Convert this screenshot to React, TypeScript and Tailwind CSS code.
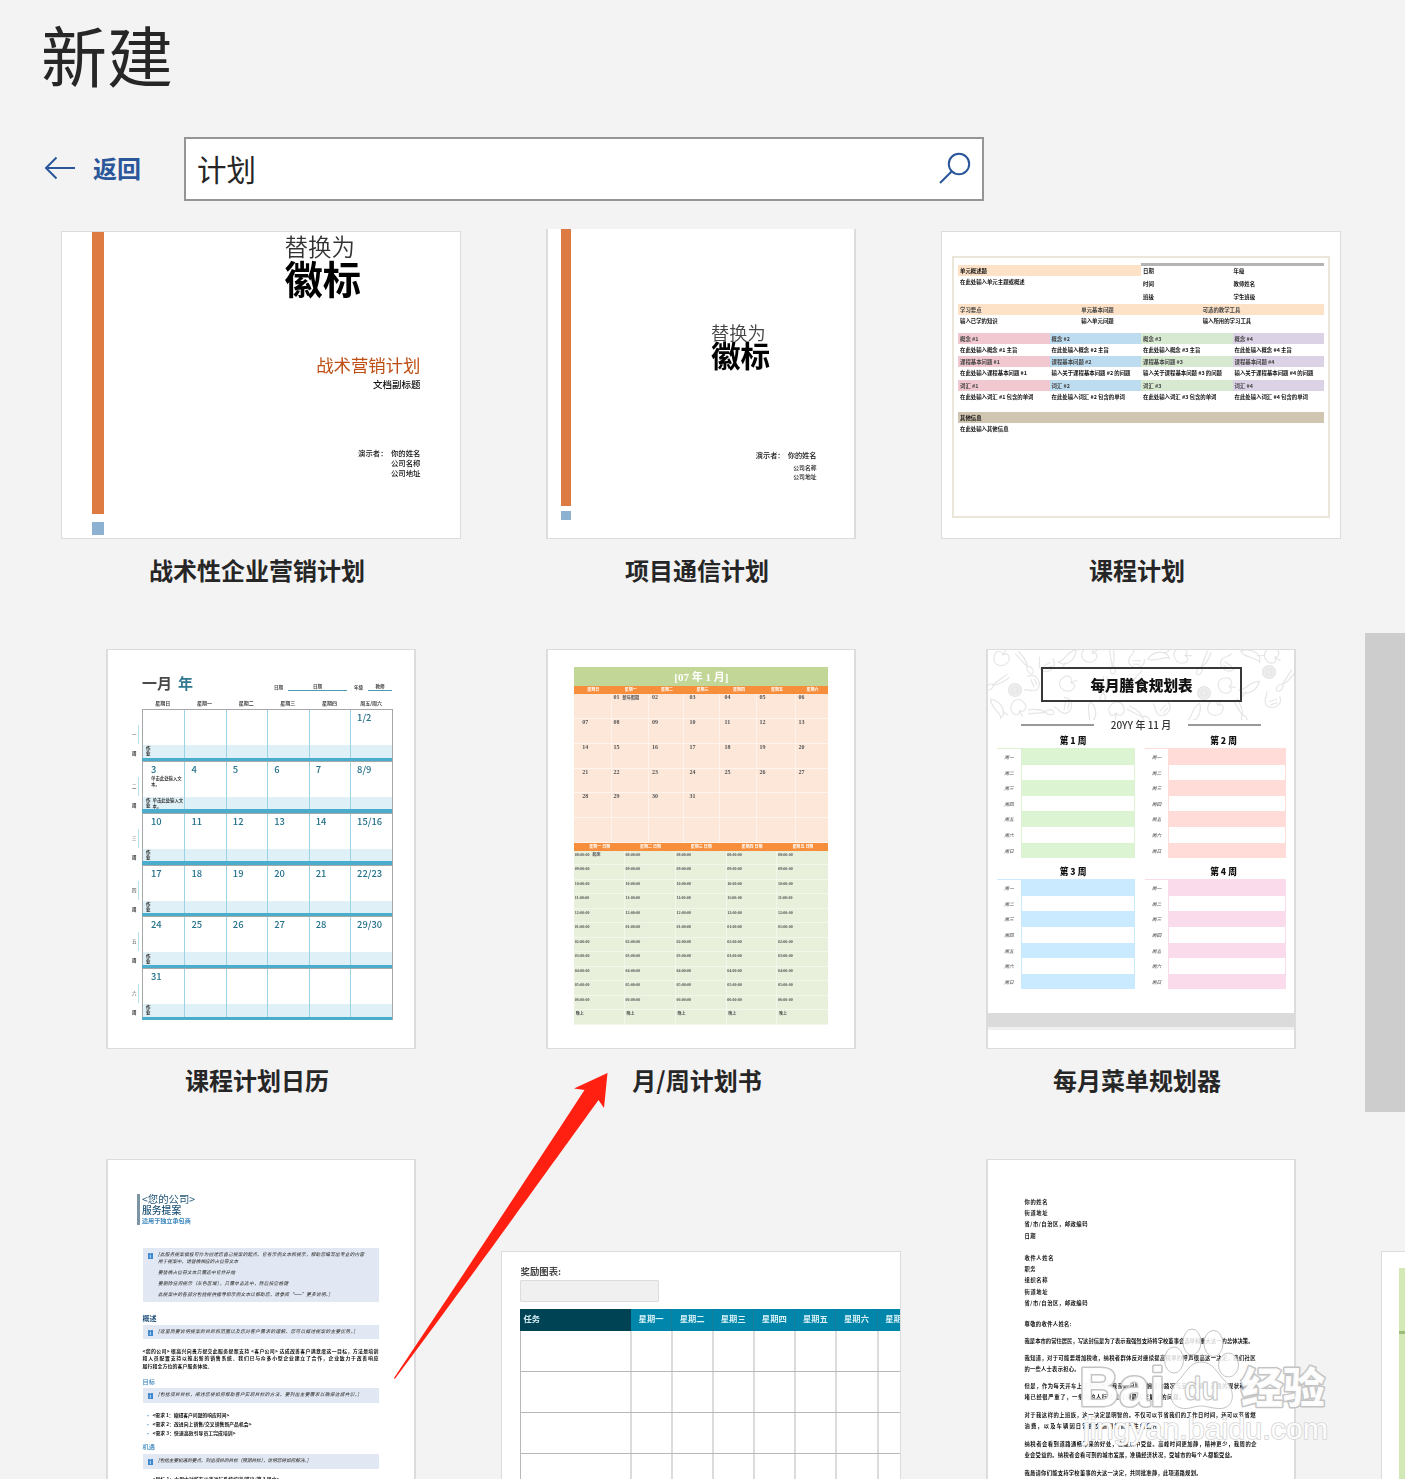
import type { ReactNode } from 'react';
import clsx from 'clsx';

type Line = { text: string; width: number; gap?: number };

// One line of miniature document text, stretched to its printed width
const Fine = ({ text, width, gap = 0, className }: Line & { className?: string }) => (
  <div
    className={clsx('h-[7px] whitespace-nowrap leading-[7px] [text-align-last:justify]', className)}
    style={{ width, marginTop: gap }}
  >
    {text}
  </div>
);

const Portrait = ({ children }: { children?: ReactNode }) => (
  <div className="h-[400px] w-[310px] overflow-hidden border-x-2 border-y border-[#dcdcdc] bg-white">
    <div className="flex h-full w-full flex-col blur-[0.7px]">{children}</div>
  </div>
);

const Landscape = ({ children }: { children?: ReactNode }) => (
  <div className="h-[308px] w-[400px] overflow-hidden border border-[#dcdcdc] bg-white">
    <div className="flex h-full w-full flex-col blur-[0.7px]">{children}</div>
  </div>
);

const MarketingThumb = () => (
  <Landscape>
    <div className="flex h-full">
      <div className="ml-[30px] w-[11.5px] shrink-0">
        <div className="-mt-px h-[283px] bg-[#dd7b42]" />
        <div className="mt-[7.5px] h-[13px] bg-[#8db2d1]" />
      </div>
      <div className="flex w-[317px] flex-col text-[#111]">
        <div className="ml-[181px] mt-px h-[26px] text-[23.5px] font-[350] leading-[26px] text-[#333]">替换为</div>
        <div className="ml-[181px] mt-[-1px] h-[40px] text-[38.3px] font-bold leading-[40px] text-black">徽标</div>
        <div className="mt-[55.5px] h-[22px] text-right text-[17.4px] leading-[22px] text-[#bd4d12]">战术营销计划</div>
        <div className="mt-[2.5px] h-[12px] text-right text-[9.5px] font-medium leading-[12px]">文档副标题</div>
        <div className="mt-[57.5px] text-right text-[7.4px] font-medium leading-[10.4px]">
          <p>演示者：&nbsp; 你的姓名</p>
          <p>公司名称</p>
          <p>公司地址</p>
        </div>
      </div>
    </div>
  </Landscape>
);

const CommunicationThumb = () => (
  <Portrait>
    <div className="flex h-full">
      <div className="ml-[13px] w-[9.5px] shrink-0">
        <div className="h-[365.5px] bg-[#dd7b42]" />
        <div className="mt-[5px] h-[9px] bg-[#8db2d1]" />
      </div>
      <div className="flex w-[246px] flex-col text-[#111]">
        <div className="ml-[140.5px] mt-[182px] h-[20px] text-[18.2px] font-[350] leading-[20px] text-[#444]">替换为</div>
        <div className="ml-[140.5px] mt-[-2.5px] h-[30px] text-[29.6px] font-bold leading-[30px] text-black">徽标</div>
        <div className="mt-[80px] text-right text-[7.2px] font-medium leading-[10px]">演示者：&nbsp; 你的姓名</div>
        <div className="mt-[3px] text-right text-[5.8px] font-medium leading-[9px]">
          <p>公司名称</p>
          <p>公司地址</p>
        </div>
      </div>
    </div>
  </Portrait>
);

const lessonColors = ['bg-[#f1c8d0]', 'bg-[#bedcf0]', 'bg-[#d7e9d0]', 'bg-[#dcd2e6]'];

const lessonBlocks = [
  {
    head: ['概念 #1', '概念 #2', '概念 #3', '概念 #4'],
    body: ['在此处输入概念 #1 主旨', '在此处输入概念 #2 主旨', '在此处输入概念 #3 主旨', '在此处输入概念 #4 主旨'],
    width: [57, 57, 57, 57],
  },
  {
    head: ['课程基本问题 #1', '课程基本问题 #2', '课程基本问题 #3', '课程基本问题 #4'],
    body: [
      '在此处输入课程基本问题 #1',
      '输入关于课程基本问题 #2 的问题',
      '输入关于课程基本问题 #3 的问题',
      '输入关于课程基本问题 #4 的问题',
    ],
    width: [66, 79, 79, 79],
  },
  {
    head: ['词汇 #1', '词汇 #2', '词汇 #3', '词汇 #4'],
    body: ['在此处输入词汇 #1 包含的单词', '在此处输入词汇 #2 包含的单词', '在此处输入词汇 #3 包含的单词', '在此处输入词汇 #4 包含的单词'],
    width: [73, 73, 73, 73],
  },
];

const LessonThumb = () => (
  <Landscape>
    <div className="mx-[10px] mt-[24px] flex h-[262px] flex-col border-2 border-[#eae6da] px-[4px] pt-[5px] text-[5.4px] font-bold leading-[11px] text-[#111]">
      <div className="flex h-[40.5px]">
        <div className="w-1/2">
          <div className="mt-[2px] h-[11px] bg-[#fde2c8] pl-[2px] pt-px">单元概述题</div>
          <Fine className="ml-[2px]" text="在此处输入单元主题或概述" width={63} gap={3} />
        </div>
        <div className="w-1/2 border-t-[3px] border-[#b4b4b4]">
          {[['日期', '年级'], ['时间', '教师姓名'], ['班级', '学生班级']].map((r) => (
            <div key={r[0]} className="flex h-[12.8px] pl-[2px]">
              <span className="w-1/2">{r[0]}</span>
              <span>{r[1]}</span>
            </div>
          ))}
        </div>
      </div>
      <div className="grid h-[11.5px] grid-cols-3 bg-[#fde2c8] pl-[2px] pt-px text-[#444]">
        <span>学习要点</span>
        <span>单元基本问题</span>
        <span>可选的教学工具</span>
      </div>
      <div className="grid h-[17.5px] grid-cols-3 pl-[2px] pt-[0.5px]">
        <span>输入已学的知识</span>
        <span>输入单元问题</span>
        <span>输入所用的学习工具</span>
      </div>
      {lessonBlocks.map((b) => (
        <div key={b.head[0]} className="grid h-[23.8px] grid-cols-4">
          {b.head.map((h, i) => (
            <div key={h}>
              <div className={clsx('h-[11px] pl-[2px] pt-px text-[#444]', lessonColors[i])}>{h}</div>
              <Fine className="ml-[2px]" text={b.body[i]} width={b.width[i]} gap={3} />
            </div>
          ))}
        </div>
      ))}
      <div className="mt-[8.5px] h-[11px] bg-[#cfc5b0] pl-[2px] pt-px">其他信息</div>
      <Fine className="ml-[2px]" text="在此处输入其他信息" width={47} gap={3} />
    </div>
  </Landscape>
);

const calendarWeeks = [
  ['', '', '', '', '', '1/2'],
  ['3', '4', '5', '6', '7', '8/9'],
  ['10', '11', '12', '13', '14', '15/16'],
  ['17', '18', '19', '20', '21', '22/23'],
  ['24', '25', '26', '27', '28', '29/30'],
  ['31', '', '', '', '', ''],
];

const CalendarThumb = () => (
  <Portrait>
    <div className="ml-[34px] mt-[23px] flex h-[19px] w-[250px] items-center text-[15px] font-bold leading-[19px] text-[#484848]">
      一月
      <span className="ml-[6px] text-[#2f7890]">年</span>
      <div className="ml-auto mt-[9px] flex h-[10px] items-center text-[4.5px] font-bold leading-[7px]">
        <span className="w-[14px]">日期</span>
        <span className="w-[59px] border-b-[1.5px] border-[#4d9ab3] text-center">日期</span>
        <span className="ml-[7px] w-[14px]">年级</span>
        <span className="w-[24px] border-b-[1.5px] border-[#4d9ab3] text-center">教师</span>
      </div>
    </div>
    <div className="ml-[34px] mt-[5px] grid h-[12px] w-[250px] grid-cols-6 text-center text-[5px] font-bold leading-[11px] text-[#444]">
      {['星期日', '星期一', '星期二', '星期三', '星期四', '周五/周六'].map((d) => (
        <span key={d}>{d}</span>
      ))}
    </div>
    <div className="flex flex-col">
      {calendarWeeks.map((week, w) => (
        <div key={w} className="flex h-[51.85px]">
          <div className="flex w-[34px] justify-end pt-[16px] text-[4.5px] leading-[19px] text-[#333]">
            <div className="w-[5px]">
              <p>{['一', '二', '三', '四', '五', '六'][w]}</p>
              <p className="font-bold">周</p>
            </div>
            <div className="mr-[3px] ml-[1px] h-[19px] w-px bg-[#b5e0ee]" />
          </div>
          <div className="grid w-[250.5px] grid-cols-6 border-x border-t border-[#a5a8aa] text-[9.4px] font-medium text-[#22708a]">
            {week.map((day, i) => (
              <div key={i} className={clsx('flex flex-col', i > 0 && 'border-l-[1.5px] border-[#9bd3e4]')}>
                <div className={clsx('h-[35px] pt-px leading-[12px]', i === 0 ? 'pl-[8px]' : 'pl-[6px]')}>
                  {day}
                  {day === '3' && (
                    <p className="whitespace-nowrap text-[4.4px] leading-[6px] text-[#222]">单击此处输入文<br />本。</p>
                  )}
                </div>
                <div className="flex h-[12.5px] items-center bg-[#dff0f6] text-[4.4px] leading-[6px] text-[#222]">
                  {i === 0 && <span className="ml-[3px] text-[4.5px] font-bold leading-[5px]">作<br />业</span>}
                  {day === '3' && <span className="ml-[2px] whitespace-nowrap">单击此处输入文<br />本。</span>}
                </div>
                <div className="-ml-[1.5px] h-[3.4px] bg-[#4badcc]" />
              </div>
            ))}
          </div>
        </div>
      ))}
    </div>
  </Portrait>
);

const plannerCols = 'grid grid-cols-[37.7px_37.5px_35px_36px_37px_39px_1fr]';
const plannerDays = [
  ['', '01', '02', '03', '04', '05', '06'],
  ['07', '08', '09', '10', '11', '12', '13'],
  ['14', '15', '16', '17', '18', '19', '20'],
  ['21', '22', '23', '24', '25', '26', '27'],
  ['28', '29', '30', '31', '', '', ''],
  ['', '', '', '', '', '', ''],
];
const plannerHours = ['08', '09', '10', '11', '12', '01', '02', '03', '04', '05', '06'];
const dayIndent = ['pl-[8px]', 'pl-[1.5px]', 'pl-[2.5px]', 'pl-[5px]', 'pl-[4px]', 'pl-[2px]', 'pl-[2px]'];

const PlannerThumb = () => (
  <Portrait>
    <div className="ml-[26.3px] mt-[17.3px] w-[254px] font-['Liberation_Serif','Noto_Sans_CJK_SC',serif]">
      <div className="h-[19px] bg-[#c2d698] text-center text-[11px] font-bold leading-[20px] text-white">[07 年 1 月]</div>
      <div className={clsx(plannerCols, 'h-[7.7px] bg-[#f78e3c] text-center text-[4px] font-bold leading-[7px] text-white')}>
        {['星期日', '星期一', '星期二', '星期三', '星期四', '星期五', '星期六'].map((d) => (
          <span key={d}>{d}</span>
        ))}
      </div>
      {plannerDays.map((row, r) => (
        <div key={r} className={clsx(plannerCols, 'h-[24.85px] border-b border-[#fef5ef] bg-[#fce7d9] text-[6px] font-bold leading-[7px] text-[#555]')}>
          {row.map((d, i) => (
            <span key={i} className={clsx('whitespace-nowrap', dayIndent[i], i < 6 && 'border-r border-[#fef2ea]')}>
              {d}
              {d === '01' && <span className="ml-[3px] text-[4.2px]">新年假期</span>}
            </span>
          ))}
        </div>
      ))}
      <div className="grid h-[7.5px] grid-cols-5 bg-[#f78e3c] text-center text-[4px] font-bold leading-[7px] text-white">
        {['一', '二', '三', '四', '五'].map((d) => (
          <span key={d}>星期{d} 日期</span>
        ))}
      </div>
      {[...plannerHours, '晚上'].map((h) => (
        <div key={h} className="grid h-[14.5px] grid-cols-5 border-b border-[#f2f7eb] bg-[#e8efdb] text-[4px] font-bold leading-[7px] text-[#555]">
          {[0, 1, 2, 3, 4].map((c) => (
            <span key={c} className={clsx('pl-[0.5px]', c < 4 && 'border-r border-[#f2f7eb]')}>
              {h === '晚上' ? <span className="ml-px">晚上</span> : `${h}:00:00`}
              {h === '08' && c === 0 && <span className="ml-[3px] text-[4px]">起床</span>}
            </span>
          ))}
        </div>
      ))}
    </div>
  </Portrait>
);

const MealWeek = ({ title, fill, line, right }: { title: string; fill: string; line: string; right?: boolean }) => (
  <div className={right ? 'w-[141px]' : 'w-[138px]'}>
    <div className={clsx('h-[14.5px] text-center text-[8.7px] font-black leading-[13px] text-[#111]', right ? 'pl-[16px]' : 'pl-[14px]')}>{title}</div>
    <div className={clsx('flex border-t', line)}>
      <div className={clsx('text-center text-[4.8px] font-medium italic leading-[15.6px] text-[#666]', right ? 'w-[23px]' : 'w-[24px]')}>
        {['一', '二', '三', '四', '五', '六', '日'].map((d) => (
          <p key={d}>周{d}</p>
        ))}
      </div>
      <div className={clsx('flex flex-1 flex-col border-x', line)}>
        {[0, 1, 2, 3, 4, 5, 6].map((i) => (
          <div key={i} className={clsx('-mx-px h-[15.6px]', i % 2 === 0 && fill)} />
        ))}
      </div>
    </div>
  </div>
);

const doodles = [
  [14, 8], [36, 12], [58, 14], [80, 6], [102, 5], [124, 10], [148, 10], [170, 8], [194, 6], [216, 12], [240, 13], [262, 6], [284, 6],
  [10, 32], [44, 34], [8, 58], [30, 58], [52, 62], [76, 56], [102, 62], [128, 60], [150, 64], [174, 58], [206, 62], [228, 58], [252, 60], [284, 50], [262, 36],
  [80, 34], [116, 38], [154, 30], [188, 38], [238, 36], [298, 30],
];

const MealThumb = () => (
  <Portrait>
    <div className="relative h-[68px]">
      <svg className="absolute inset-0" width="306" height="70" fill="none" stroke="#e6e6e6" strokeWidth="1.2">
        {doodles.map(([x, y], i) => (
          <g key={i} transform={`translate(${x} ${y}) rotate(${(i * 53) % 180})`}>
            {i % 4 === 0 && <path d="M-8 0C-8-8 0-8 1-3 8-8 10 4 2 7-4 9-9 5-8 0ZM1-3 4-9" />}
            {i % 4 === 1 && <path d="M-12-2C-5-3 2-2 6 0M-12 2C-5 1 2 1 6 0M6 0a4 2.5 0 1 0 8 0a4 2.5 0 1 0-8 0" />}
            {i % 4 === 2 && <path d="M-7-5C0-13 10-4 7 3 3 9-3 5-5 9M-3-4 3 2M0-6 5-1" />}
            {i % 4 === 3 && <path d="M-10 3C-5-8 8-9 11-2 6-4-1 5-10 3ZM5-5 10-10" />}
          </g>
        ))}
        {[[27, 40], [281, 22], [216, 43]].map(([x, y]) => (
          <g key={x} fill="#ededed">
            <circle cx={x} cy={y} r="6.5" />
            <circle cx={x} cy={y} r="3" />
          </g>
        ))}
      </svg>
      <div className="relative ml-[53px] mt-[17px] flex h-[35px] w-[201px] items-center justify-center border-2 border-[#383838] text-[14.6px] font-black text-[#111]">
        每月膳食规划表
      </div>
    </div>
    <div className="mx-[33px] flex h-[13px] items-center justify-between text-[10px] font-medium leading-[11px] text-[#333]">
      <span className="h-[2px] w-[73px] bg-[#999]" />
      20YY 年 11 月
      <span className="h-[2px] w-[73px] bg-[#999]" />
    </div>
    <div className="ml-[9px] mt-[2.5px] flex w-[289px] flex-wrap justify-between gap-y-[6.5px]">
      <MealWeek title="第 1 周" fill="bg-[#ddf4d3]" line="border-[#ddf4d3]" />
      <MealWeek title="第 2 周" fill="bg-[#ffdcd8]" line="border-[#ffdcd8]" right />
      <MealWeek title="第 3 周" fill="bg-[#caeaff]" line="border-[#caeaff]" />
      <MealWeek title="第 4 周" fill="bg-[#fadbeb]" line="border-[#fadbeb]" right />
    </div>
    <div className="mt-auto mb-[18.5px] h-[16.5px] shrink-0 border-b-[3px] border-[#f0f0f0] bg-[#dbdbdb]" />
  </Portrait>
);

const Note = ({ lines, className }: { lines: Line[]; className: string }) => (
  <div className={clsx('flex w-[236.5px] bg-[#e1e8f3] pl-[5px] text-[4.6px] font-medium italic text-[#444]', className)}>
    <span className="mt-[2px] mr-[5px] flex h-[6px] w-[5.5px] items-center justify-center bg-[#3d88cf] text-[5px] not-italic text-white">i</span>
    <div>
      {lines.map((l) => (
        <Fine key={l.text} {...l} />
      ))}
    </div>
  </div>
);

const ProposalThumb = () => (
  <Portrait>
    <div className="ml-[29px] mt-[33.5px] h-[31px] border-l-[3.5px] border-[#7d95a3] pl-[2px] text-[#1f5377]">
      <div className="h-[11.5px] text-[10.4px] leading-[10px]">&lt;您的公司&gt;</div>
      <div className="h-[10.5px] text-[9.8px] font-medium leading-[10px]">服务提案</div>
      <div className="text-[6.1px] font-bold leading-[10px] text-[#3a86bd]">适用于独立承包商</div>
    </div>
    <div className="ml-[34.5px] mt-[23px] flex flex-col">
      <Note
        className="h-[54.5px] pt-[3px]"
        lines={[
          { text: '[此服务提案模板可作为创建您自己提案的起点。它有示例文本和提示，帮助您编写出专业的内容', width: 206 },
          { text: '用于提案中，请替换相应的占位符文本', width: 80, gap: 0.5 },
          { text: '要替换占位符文本只需选中它并开始', width: 77, gap: 3.5 },
          { text: '要删除任何提示（灰色区域），只需单击选中，然后按空格键', width: 130, gap: 4 },
          { text: '此提案中的各部分包括提供指导和示例文本以帮助您，请参阅“——”更多说明。]', width: 172, gap: 4 },
        ]}
      />
      <div className="mt-[9.5px] h-[13px] text-[7px] font-bold leading-[12px] text-[#1f4e79]">概述</div>
      <Note className="h-[14px] pt-[3px]" lines={[{ text: '[这里简要说明提案的目的和范围以及您对客户需求的理解。您可以概述提案的主要优势。]', width: 197 }]} />
      <div className="mt-[8px] text-[4.9px] font-bold text-[#111]">
        <Fine text="<您的公司> 很高兴向贵方提交此服务提案支持 <客户公司> 达成改善客户满意度这一目标，方法是培训" width={236} />
        <Fine text="和人员配置支持以推出新的销售系统。我们已与众多小型企业建立了合作，企业致力于改善响应" width={236} gap={0.5} />
        <Fine text="履行和全方位的客户服务体验。" width={70} gap={0.5} />
      </div>
      <div className="mt-[8px] h-[11.5px] text-[6.2px] font-medium leading-[10px] text-[#3a86bd]">目标</div>
      <Note className="h-[15px] pt-[3px]" lines={[{ text: '[包括项目目标，阐述您将如何帮助客户实现目标的方法。要列出主要需求以确保达成共识。]', width: 201 }]} />
      <div className="mt-[8px] flex flex-col gap-[2px] text-[4.8px] font-bold text-[#111]">
        {[
          { text: '<需求 1：缩短客户问题的响应时间>', width: 75 },
          { text: '<需求 2：改进向上销售/交叉销售新产品机会>', width: 99 },
          { text: '<需求 3：快速高效引导员工完成培训>', width: 83 },
        ].map((l) => (
          <div key={l.text} className="flex">
            <span className="w-[10px] pl-[3px] leading-[7px] text-[#3a86bd]">•</span>
            <Fine {...l} />
          </div>
        ))}
      </div>
      <div className="mt-[6px] h-[11.5px] text-[6.2px] font-medium leading-[10px] text-[#3a86bd]">机遇</div>
      <Note className="h-[15px] pt-[3px]" lines={[{ text: '[包括主要机遇的要点。列出项目的目标（预期目标），说明您将如何解决。]', width: 148 }]} />
      <div className="ml-[10px] text-[4.8px] font-bold text-[#111]">
        <Fine text="<目标 1：六周内对所有代表进行系统培训/推出/第 3 周内>" width={127} gap={6.5} />
      </div>
    </div>
  </Portrait>
);

const rewardCols = 'grid w-[400px] grid-cols-[111.5px_repeat(7,41.1px)]';

const RewardThumb = () => (
  <Landscape>
    <div className="ml-[17.5px] mt-[14px] w-[400px] font-['Liberation_Serif','Noto_Sans_CJK_SC',serif]">
      <div className="h-[14px] pl-[1px] text-[9.4px] font-bold leading-[13px] text-[#444]">奖励图表:</div>
      <div className="h-[22px] w-[139px] rounded-[1px] border border-[#dcdcdc] bg-[#f0f0f0]" />
      <div className={clsx(rewardCols, 'mt-[7px] h-[21.5px] bg-[#0086aa] text-center text-[8.3px] font-bold leading-[21px] text-[#d8f1f7]')}>
        <span className="bg-[#004354] pl-[4px] text-left">任务</span>
        {['一', '二', '三', '四', '五', '六', '日'].map((d) => (
          <span key={d} className="border-r border-[#1a7c97]">星期{d}</span>
        ))}
      </div>
      {[0, 1, 2, 3, 4].map((r) => (
        <div key={r} className={clsx(rewardCols, 'h-[41.1px] border-b border-l border-[#b8b8b8]')}>
          {[0, 1, 2, 3, 4, 5, 6, 7].map((c) => (
            <span key={c} className="border-r-2 border-[#dcdcdc]" />
          ))}
        </div>
      ))}
    </div>
  </Landscape>
);

const letterLines: Line[] = [
  { text: '你的姓名', width: 23 },
  { text: '街道地址', width: 23, gap: 4.2 },
  { text: '省/市/自治区，邮政编码', width: 63, gap: 4.2 },
  { text: '日期', width: 11, gap: 4.2 },
  { text: '收件人姓名', width: 29, gap: 15.5 },
  { text: '职务', width: 11, gap: 4.2 },
  { text: '组织名称', width: 23, gap: 4.2 },
  { text: '街道地址', width: 23, gap: 4.2 },
  { text: '省/市/自治区，邮政编码', width: 63, gap: 4.2 },
  { text: '尊敬的收件人姓名:', width: 47, gap: 14.5 },
  { text: '我是本市的常住居民，写这封信是为了表示我强烈支持将学校董事会选举和重大这一的总体决策。', width: 229, gap: 9.5 },
  { text: '我知道，对于可能要增加税收，纳税者群体反对继续提高税率的呼声很高这一决定，我们社区', width: 231, gap: 10.2 },
  { text: '的一些人士表示担心。', width: 55, gap: 4.2 },
  { text: '但是，作为每天开车上下班的居民我亲眼目睹了拥堵的路况与安全问题，道路的现状和交通', width: 232, gap: 10.2 },
  { text: '堵已经很严重了，一条新的人行道是我们最需要解决的问题。', width: 160, gap: 4 },
  { text: '对于我这样的上班族，这一决定是明智的。不仅可以节省我们的工作日时间，还可以节省燃', width: 231, gap: 10.8 },
  { text: '油费，以及车辆因日常的交通拥堵而产生的费用。', width: 140, gap: 4.2 },
  { text: '纳税者会看到道路通畅带来的好处，也能从中受益。高峰时间更加静，精神更少，我周的企', width: 232, gap: 10.2 },
  { text: '业会受益的。纳税者会看可到的城市发展，准确经济状况，受城市的每个人都能受益。', width: 211, gap: 4.2 },
  { text: '我恳请你们能支持学校董事的大这一决定，共同批准静，此项道路规划。', width: 177, gap: 10.8 },
];

const LetterThumb = () => (
  <Portrait>
    <div className="ml-[36.5px] mt-[39px] text-[5.3px] font-bold text-[#111]">
      {letterLines.map((l, i) => (
        <Fine key={i} {...l} />
      ))}
    </div>
  </Portrait>
);

const GreenThumb = () => (
  <Landscape>
    <div className="ml-[16.5px] mt-[16px] h-[280px] bg-[#d2e8b5] pt-[63px]">
      <div className="h-[3px] bg-[#9dbd7d]" />
    </div>
  </Landscape>
);

const templates: { name: string; thumb: ReactNode }[] = [
  { name: '战术性企业营销计划', thumb: <MarketingThumb /> },
  { name: '项目通信计划', thumb: <CommunicationThumb /> },
  { name: '课程计划', thumb: <LessonThumb /> },
  { name: '', thumb: null },
  { name: '课程计划日历', thumb: <CalendarThumb /> },
  { name: '月/周计划书', thumb: <PlannerThumb /> },
  { name: '每月菜单规划器', thumb: <MealThumb /> },
  { name: '', thumb: null },
  { name: '', thumb: <ProposalThumb /> },
  { name: '', thumb: <RewardThumb /> },
  { name: '', thumb: <LetterThumb /> },
  { name: '', thumb: <GreenThumb /> },
];

const RedArrow = () => (
  <svg className="absolute left-[393px] top-[1072px]" width="216" height="308" viewBox="393 1072 216 308">
    <path d="M607.5 1073 574 1088.5 584.5 1090C540 1158 470 1265 394 1378L394.8 1379C475 1272 550 1167 598.5 1100L604 1108Z" fill="#ff2012" />
  </svg>
);

const Watermark = () => (
  <svg className="absolute left-[1070px] top-[1320px]" width="270" height="135" viewBox="1070 1320 270 135">
    <g fill="#fff" fillOpacity="0.82" stroke="#c4c4c4" strokeWidth="1" strokeLinejoin="round">
      <ellipse cx="1174" cy="1360" rx="9.5" ry="13" />
      <ellipse cx="1192" cy="1342" rx="9" ry="13" />
      <ellipse cx="1213.5" cy="1343.5" rx="9.5" ry="13" />
      <ellipse cx="1228.5" cy="1365" rx="10" ry="12" />
      <path d="M1201 1362C1190 1362 1185 1374 1178 1381 1169 1389 1168 1405 1181 1408 1188 1410 1194 1406 1201 1406 1208 1406 1216 1410 1224 1408 1236 1404 1234 1388 1225 1381 1217 1373 1213 1362 1201 1362Z" />
      <g fontWeight="700" fontFamily="Liberation Sans, sans-serif">
        <text x="1079" y="1406" fontSize="55" strokeWidth="3" paintOrder="stroke" textLength="86" lengthAdjust="spacingAndGlyphs" fillOpacity="0.95">Bai</text>
        <text x="1184" y="1400" fontSize="33" strokeWidth="1.2" textLength="35" lengthAdjust="spacingAndGlyphs">du</text>
      </g>
      <text x="1241" y="1403" fontSize="42" fontWeight="900" strokeWidth="3" paintOrder="stroke" fillOpacity="0.95" fontFamily="Noto Sans CJK SC, sans-serif">经验</text>
      <text x="1083" y="1439" fontSize="29" stroke="#d5d5d5" strokeWidth="1.6" paintOrder="stroke" fillOpacity="0.95" textLength="245" lengthAdjust="spacingAndGlyphs" fontFamily="Liberation Sans, sans-serif">jingyan.baidu.com</text>
    </g>
  </svg>
);

export default function App() {
  return (
    <div className="relative flex h-[1479px] w-[1405px] flex-col overflow-hidden bg-[#f3f3f3] font-['Noto_Sans_CJK_SC',sans-serif] text-[#262626]">
      <h1 className="ml-[41px] mt-[5px] h-[100px] text-[66px] font-normal leading-[96px]">新建</h1>

      <div className="ml-[44px] mt-[32px] flex h-[64px] items-center">
        <button className="flex items-center text-[24px] font-bold leading-[30px] text-[#2b579a]">
          <svg className="-mt-[2px]" width="32" height="24" viewBox="0 0 32 24" fill="none" stroke="#2b579a" strokeWidth="2">
            <path d="M31 12H2M12.5 1.5 2 12 12.5 22.5" />
          </svg>
          <span className="-mt-[2px] ml-[17px]">返回</span>
        </button>
        <div className="ml-[43px] flex h-[64px] w-[800px] items-center justify-between border-2 border-[#959595] bg-white pl-[11px] pr-[10px]">
          <span className="-mt-[2px] text-[29.5px] leading-[40px]">计划</span>
          <svg width="34" height="34" viewBox="0 0 34 34" fill="none" stroke="#2b579a" strokeWidth="2">
            <circle cx="21" cy="12" r="10.2" />
            <path d="M13.8 19.2 2 31" />
          </svg>
        </div>
      </div>

      <div className="mt-[28px] flex-1 overflow-hidden pl-[41px]">
        <div className="-mt-[90px] grid w-[1760px] grid-cols-4">
          {templates.map((t, i) => (
            <div key={i} className="flex h-[510px] flex-col items-center">
              <div className="flex h-[400px] items-end">{t.thumb}</div>
              <div className="mt-[14px] pr-2 text-[24px] font-bold leading-[34px]">{t.name}</div>
            </div>
          ))}
        </div>
      </div>

      <div className="absolute right-0 top-[633px] h-[479px] w-[40px] bg-[#cdcdcd]" />
      <RedArrow />
      <Watermark />
    </div>
  );
}
